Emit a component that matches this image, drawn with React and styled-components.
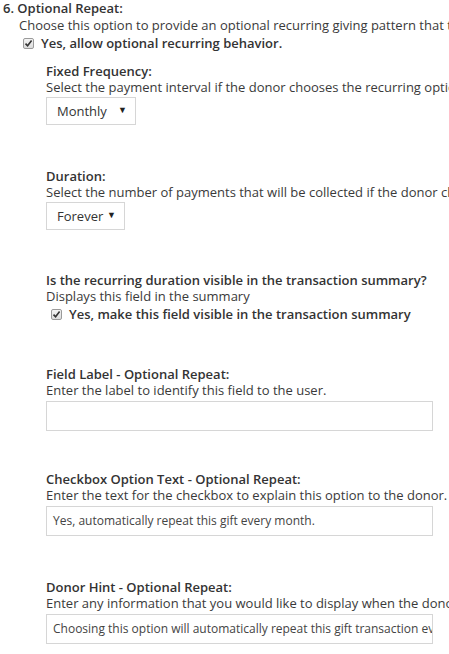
import React from 'react';
import styled, { createGlobalStyle } from 'styled-components';

const GlobalStyle = createGlobalStyle`
  html, body {
    margin: 0;
    padding: 0;
    background: #ffffff;
    overflow: hidden;
  }
  body {
    font-family: "Open Sans", "Liberation Sans", sans-serif;
    font-size: 13px;
    line-height: 16px;
    color: #333333;
  }
`;

const Page = styled.div`
  width: 449px;
  height: 654px;
  overflow: hidden;
  padding: 0 0 0 3px;
  box-sizing: border-box;
  white-space: nowrap;
`;

const Heading = styled.div`
  font-weight: 600;
  color: #333;
`;

const Body = styled.div`
  padding-left: 16px;
  margin-top: 1px;
`;

const Help = styled.div`
  color: #3a3a3a;
`;

const CheckRow = styled.label`
  display: flex;
  align-items: center;
  gap: 7px;
  height: 20px;
  padding-left: ${(p) => p.$indent || 4}px;
  font-weight: 600;
  color: #333;
`;

const Box = styled.span`
  width: 11px;
  height: 11px;
  box-sizing: border-box;
  border: 1px solid #9a9a9a;
  border-radius: 2px;
  background: linear-gradient(#f4f4f4, #dcdcdc);
  display: flex;
  align-items: center;
  justify-content: center;
`;

const Group = styled.div`
  padding-left: 43px;
  margin-top: ${(p) => p.$top || 42}px;
`;

const Label = styled.div`
  font-weight: 600;
  color: #333;
`;

const SelectBox = styled.div`
  margin-top: 2px;
  width: ${(p) => p.$width}px;
  height: 28px;
  box-sizing: border-box;
  border: 1px solid #d6d6d6;
  background: #fff;
  display: flex;
  align-items: center;
  justify-content: space-between;
  padding: 0 8px 0 10px;
  color: #333;
`;

const Arrow = styled.span`
  font-size: 9px;
  color: #222;
  margin-top: -3px;
`;

const TextBox = styled.div`
  margin-top: 3px;
  width: 387px;
  height: 30px;
  box-sizing: border-box;
  border: 1px solid #d6d6d6;
  background: #fff;
  display: flex;
  align-items: center;
  padding: 0 6px;
  font-size: 12px;
  color: #444;
  overflow: hidden;
`;

const Check = () => (
  <Box>
    <svg width="9" height="9" viewBox="0 0 9 9">
      <path d="M1.5 4.6 L3.6 6.8 L7.6 1.6" fill="none" stroke="#333" strokeWidth="1.6" />
    </svg>
  </Box>
);

export default function App() {
  return (
    <Page>
      <GlobalStyle />
      <Heading>6. Optional Repeat:</Heading>
      <Body>
        <Help>Choose this option to provide an optional recurring giving pattern that the donor may choose.</Help>
        <CheckRow>
          <Check />
          Yes, allow optional recurring behavior.
        </CheckRow>
      </Body>

      <Group $top={10}>
        <Label>Fixed Frequency:</Label>
        <Help>Select the payment interval if the donor chooses the recurring option.</Help>
        <SelectBox $width={90}>
          Monthly <Arrow>▼</Arrow>
        </SelectBox>
      </Group>

      <Group $top={43}>
        <Label>Duration:</Label>
        <Help>Select the number of payments that will be collected if the donor chooses the recurring option.</Help>
        <SelectBox $width={79}>
          Forever <Arrow>▼</Arrow>
        </SelectBox>
      </Group>

      <Group>
        <Label>Is the recurring duration visible in the transaction summary?</Label>
        <Help>Displays this field in the summary</Help>
        <CheckRow $indent={5}>
          <Check />
          Yes, make this field visible in the transaction summary
        </CheckRow>
      </Group>

      <Group>
        <Label>Field Label - Optional Repeat:</Label>
        <Help>Enter the label to identify this field to the user.</Help>
        <TextBox />
      </Group>

      <Group $top={40}>
        <Label>Checkbox Option Text - Optional Repeat:</Label>
        <Help>Enter the text for the checkbox to explain this option to the donor.</Help>
        <TextBox>Yes, automatically repeat this gift every month.</TextBox>
      </Group>

      <Group $top={43}>
        <Label>Donor Hint - Optional Repeat:</Label>
        <Help>Enter any information that you would like to display when the donor chooses this option.</Help>
        <TextBox>Choosing this option will automatically repeat this gift transaction every month.</TextBox>
      </Group>
    </Page>
  );
}
